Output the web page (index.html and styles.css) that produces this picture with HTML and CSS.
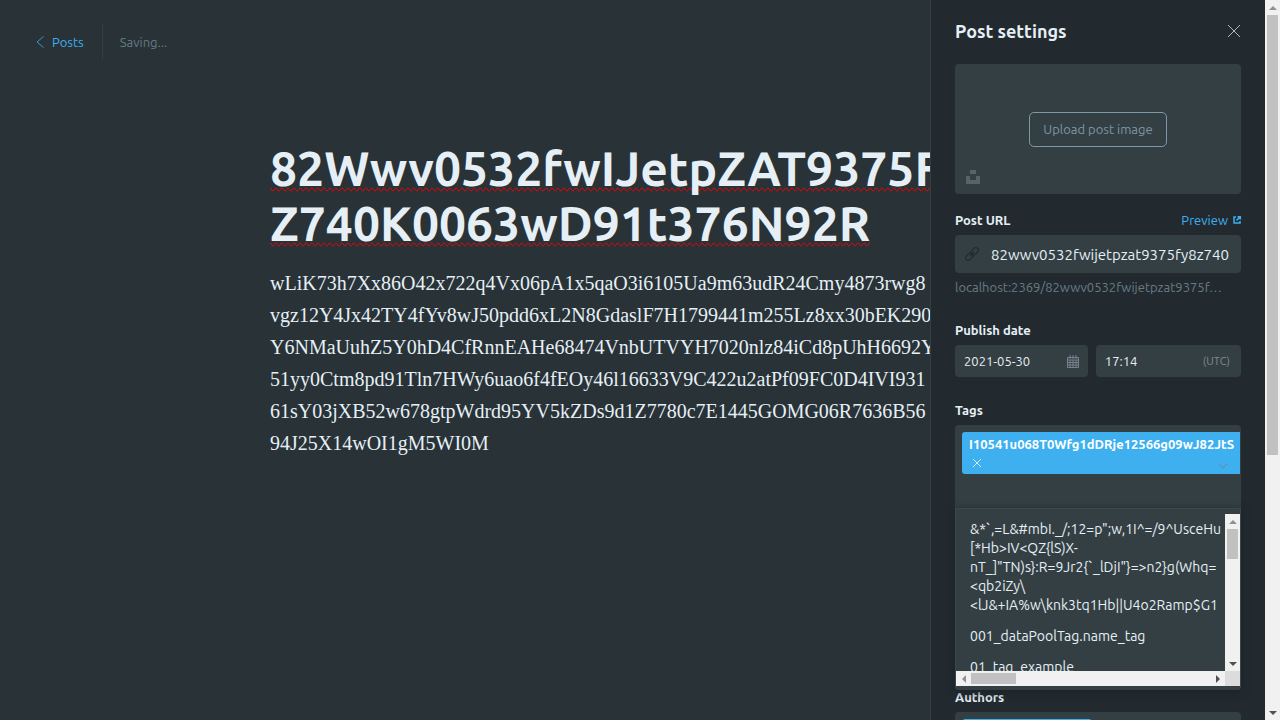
FILE: index.html
```html
<!DOCTYPE html>
<html lang="en">
<head>
<meta charset="utf-8">
<title>Post settings</title>
<link rel="stylesheet" href="styles.css">
</head>
<body>
<main class="editor">
  <header class="topbar">
    <a class="back" href="#"><svg class="back-icon" viewBox="0 0 8 12" aria-hidden="true"><path d="M7.500.500 1 6l6.500 5.500"/></svg>Posts</a>
    <span class="status">Saving...</span>
  </header>
  <div class="column">
    <textarea class="title" rows="2" aria-label="Post title">82Wwv0532fwIJetpZAT9375FY8
Z740K0063wD91t376N92R</textarea>
    <p class="content">wLiK73h7Xx86O42x722q4Vx06pA1x5qaO3i6105Ua9m63udR24Cmy4873rwg8<br>vgz12Y4Jx42TY4fYv8wJ50pdd6xL2N8GdaslF7H1799441m255Lz8xx30bEK290<br>Y6NMaUuhZ5Y0hD4CfRnnEAHe68474VnbUTVYH7020nlz84iCd8pUhH6692Y<br>51yy0Ctm8pd91Tln7HWy6uao6f4fEOy46l16633V9C422u2atPf09FC0D4IVI931<br>61sY03jXB52w678gtpWdrd95YV5kZDs9d1Z7780c7E1445GOMG06R7636B56<br>94J25X14wOI1gM5WI0M</p>
  </div>
</main>

<aside class="panel">
  <div class="settings">
    <div class="heading">
      <h4>Post settings</h4>
      <button class="close" aria-label="Close"><svg viewBox="0 0 14 14"><path d="m1 1 12 12M13 1 1 13"/></svg></button>
    </div>

    <div class="uploader">
      <button class="upload">Upload post image</button>
      <button class="unsplash" aria-label="Unsplash"><svg viewBox="0 0 14 14"><path d="M4 0h6v4H4zM0 6h4v4h6V6h4v8H0z"/></svg></button>
    </div>

    <div class="label-row">
      <label for="url">Post URL</label>
      <a class="preview" href="#">Preview <svg viewBox="0 0 8 8"><path d="M3 1H1v6h6V5M4.500.700h2.800v2.800M7 1 3.500 4.500"/></svg></a>
    </div>
    <div class="field url">
      <svg class="link-icon" viewBox="0 0 14 14"><g transform="rotate(-45 7 7)"><rect x="-1" y="4.500" width="8.500" height="5" rx="2.500"/><rect x="6.500" y="4.500" width="8.500" height="5" rx="2.500"/><path d="M4 7h6"/></g></svg>
      <input id="url" type="text" value="82wwv0532fwijetpzat9375fy8z740k0063wd91t376n92r">
    </div>
    <p class="hint">localhost:2369/82wwv0532fwijetpzat9375f…</p>

    <label class="label" for="date">Publish date</label>
    <div class="dates">
      <div class="field date">
        <input id="date" type="text" value="2021-05-30">
        <svg class="calendar" viewBox="0 0 12 13"><path d="M.500 2.500h11v10H.500zM.500 5h11M.500 7.500h11M.500 10h11M3 5v8M6 5v8M9 5v8M3 0v4M6 0v4M9 0v4"/></svg>
      </div>
      <div class="field time">
        <input type="text" value="17:14" aria-label="Publish time">
        <span class="utc">(UTC)</span>
      </div>
    </div>

    <label class="label" for="tags">Tags</label>
    <div class="tags">
      <div class="token">
        <span class="token-text">I10541u068T0Wfg1dDRje12566g09wJ82JtS</span>
        <button class="remove" aria-label="Remove tag"><svg viewBox="0 0 10 10"><path d="m1 1 8 8M9 1 1 9"/></svg></button>
        <svg class="chevron" viewBox="0 0 10 6"><path d="m.500.500 4.500 4.500L9.500.500"/></svg>
      </div>
      <input id="tags" class="search" type="text">
      <div class="dropdown">
        <div class="viewport">
          <ul class="options">
            <li>&amp;*`,=L&amp;#mbI._/;12=p";w,1I^=/9^UsceHu<br>[*Hb&gt;IV&lt;QZ{lS)X-<br>nT_]"TN)s}:R=9Jr2{`_lDjI"}=&gt;n2}g(Whq=<br>&lt;qb2iZy\<br>&lt;lJ&amp;+IA%w\knk3tq1Hb||U4o2Ramp$G1</li>
            <li>001_dataPoolTag.name_tag</li>
            <li>01_tag_example</li>
          </ul>
          <div class="bar vertical"><i class="arrow up off"></i><i class="thumb short"></i><i class="arrow down"></i></div>
        </div>
        <div class="bottom">
          <div class="bar horizontal"><i class="arrow left off"></i><i class="thumb"></i><i class="arrow right"></i></div>
          <i class="corner"></i>
        </div>
      </div>
    </div>

    <span class="label">Authors</span>
    <div class="authors"><div class="author"></div></div>
  </div>
  <div class="bar vertical page-bar"><i class="arrow up off"></i><i class="thumb long"></i><i class="arrow down"></i></div>
</aside>
</body>
</html>
```
FILE: styles.css
```css
* { box-sizing: border-box; }
html, body { height: 100%; }
body {
  margin: 0;
  overflow: hidden;
  background: #283237;
  color: #e5eff5;
  font: 13px/20px Ubuntu, "Noto Sans", sans-serif;
}
button, input, textarea {
  margin: 0;
  padding: 0;
  border: 0;
  background: none;
  color: inherit;
  font: inherit;
  outline: 0;
}
svg { display: block; fill: none; stroke: currentColor; overflow: visible; }
h4, p, ul { margin: 0; padding: 0; }

.editor { display: flex; flex-direction: column; min-height: 100%; }
.topbar { display: flex; align-items: center; height: 84px; padding: 0 36px; }
.back {
  display: flex;
  align-items: center;
  gap: 8px;
  height: 36px;
  padding-right: 18px;
  border-right: 1px solid #343f44;
  color: #3eb0ef;
  text-decoration: none;
}
.back-icon { width: 8px; height: 12px; opacity: .8; }
.status { padding-left: 17px; color: #667a83; }
.column { width: 740px; max-width: 100%; margin: 0 auto; padding-top: 57px; }
.title {
  display: block;
  width: 100%;
  overflow: hidden;
  resize: none;
  white-space: pre;
  font-size: 48px;
  font-weight: 700;
  line-height: 55px;
  text-decoration-line: spelling-error;
  text-decoration-skip-ink: none;
}
.content {
  padding-top: 16px;
  white-space: nowrap;
  font: 20px/32px "Liberation Serif", serif;
}

.panel {
  position: fixed;
  top: 0;
  right: 0;
  bottom: 0;
  display: flex;
  width: 350px;
  background: #222a30;
  border-left: 1px solid #343f44;
}
.settings { flex: 1; min-width: 0; padding: 0 24px; overflow: hidden; }
.heading { display: flex; align-items: center; justify-content: space-between; height: 64px; padding-bottom: 2px; }
h4 { font-size: 18px; line-height: 24px; font-weight: 700; }
.close svg { width: 14px; height: 14px; stroke: #aeb8be; }
.uploader {
  position: relative;
  display: flex;
  align-items: center;
  justify-content: center;
  height: 130px;
  background: #343f44;
  border-radius: 4px;
}
.upload { height: 35px; padding: 0 13px; border: 1px solid #7c98a8; border-radius: 5px; color: #7c95a3; }
.unsplash { position: absolute; left: 11px; bottom: 10px; }
.unsplash svg { width: 14px; height: 14px; fill: #56636a; stroke: none; }
.label-row { display: flex; align-items: center; justify-content: space-between; padding: 16px 0 5px; }
label, .label { font-weight: 700; }
.label { display: block; padding: 23px 0 5px; }
.preview { display: flex; align-items: center; gap: 5px; color: #3eb0ef; text-decoration: none; }
.preview svg { width: 8px; height: 8px; stroke-width: 1.500; }
.field { display: flex; align-items: center; min-width: 0; background: #343f44; border-radius: 4px; }
.field input { flex: 1; width: 0; min-width: 0; }
.url { height: 38px; padding: 0 12px 0 10px; gap: 12px; font-size: 15px; }
.url input { padding-top: 2px; }
.link-icon { width: 14px; height: 14px; color: #1f282d; }
.hint { padding: 4px 0 0; overflow: hidden; white-space: nowrap; text-overflow: ellipsis; color: #687c85; }
.dates { display: flex; gap: 8px; }
.date { flex: 133 1 0; height: 32px; padding: 0 9px; }
.time { flex: 145 1 0; height: 32px; padding: 0 11px 0 9px; }
.calendar { width: 12px; height: 13px; color: #74838b; }
.utc { font-size: 11px; color: #7c8b93; }
.tags { position: relative; height: 239px; padding: 7px 1px 0 7px; background: #343f44; border-radius: 4px; }
.token { position: relative; height: 42px; padding: 2px 0 0 7px; background: #3eb0ef; border-radius: 3px 0 0 3px; color: #fff; }
.token-text { display: block; overflow: hidden; white-space: nowrap; font-weight: 700; }
.remove { display: block; padding: 4px 3px; }
.remove svg { width: 10px; height: 10px; stroke: #d5edfb; }
.chevron { position: absolute; right: 12px; bottom: 5px; width: 10px; height: 6px; color: #6a8a9c; }
.search { display: block; width: 100%; height: 30px; }
.dropdown {
  position: absolute;
  top: 83px;
  left: 0;
  right: 0;
  padding: 5px 0 4px;
  background: #343f44;
  border: 1px solid #3a474e;
  border-bottom: 0;
  border-radius: 0 0 4px 4px;
  box-shadow: 0 2px 8px #1b2227;
}
.viewport { display: flex; height: 157px; }
.options { flex: 1; min-width: 0; overflow: hidden; list-style: none; font-size: 14px; line-height: 19px; white-space: nowrap; }
.options li { padding: 6px 14px; }
.bottom { display: flex; height: 15px; }
.bar { display: flex; background: #f1f1f1; }
.vertical { flex-direction: column; width: 15px; }
.horizontal { flex: 1; }
.corner { width: 15px; background: #dcdcdc; }
.arrow { display: flex; align-items: center; justify-content: center; width: 15px; height: 15px; flex: none; }
.arrow::before { content: ""; border: 4px solid transparent; }
.up::before { border-top: 0; border-bottom-color: #505050; }
.down::before { border-bottom: 0; border-top-color: #505050; }
.left::before { border-left: 0; border-right-color: #505050; }
.right::before { border-right: 0; border-left-color: #505050; }
.off { opacity: .6; }
.down { margin-top: auto; }
.right { margin-left: auto; }
.thumb { background: #c1c1c1; }
.horizontal .thumb { width: 45px; margin: 2px 0; }
.vertical .thumb { margin: 0 2px; }
.short { height: 30px; }
.long { height: 61.1%; }
.authors { height: 44px; padding: 7px; background: #343f44; border-radius: 4px; }
.author { width: 130px; height: 26px; background: #343f44; border: 1px solid #3eb0ef; border-radius: 3px; }
```
